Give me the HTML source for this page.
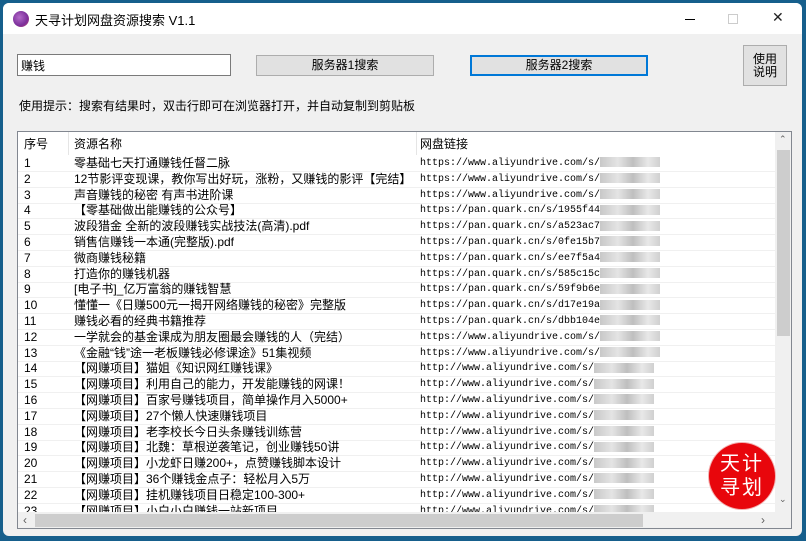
<!DOCTYPE html><html><head><meta charset="utf-8"><style>
*{margin:0;padding:0;box-sizing:border-box}
body{width:806px;height:541px;background:#165f8c;position:relative;overflow:hidden;font-family:"Liberation Sans","Noto Sans CJK SC",sans-serif;font-size:12px;color:#000}
.win{position:absolute;left:3px;top:3px;width:799px;height:533px;background:#f0f0f0;border-radius:6px;overflow:hidden}
.title{position:absolute;left:0;top:0;width:100%;height:31px;background:#fff}
.abs{position:absolute}
.btn{position:absolute;background:#e1e1e1;border:1px solid #adadad;text-align:center;font-size:12px}
.tbl{position:absolute;left:14px;top:128px;width:775px;height:398px;background:#fff;border:1px solid #828790;overflow:hidden}
.row{position:absolute;left:0;width:757px;height:16px;border-bottom:1px solid #f0f0f0;font-size:12px;line-height:15px;white-space:nowrap}
.row span{position:absolute}
.u{font-family:"Liberation Mono",monospace;font-size:10px;letter-spacing:0}
.blur{display:inline-block;width:60px;height:10px;vertical-align:middle;background:linear-gradient(90deg,#c8c8c8,#e4e4e4 30%,#bfbfbf 55%,#e8e8e8 80%,#d0d0d0)}
</style></head><body>
<div class="win">
<div class="title">
<div class="abs" style="left:10px;top:8px;width:16px;height:16px;border-radius:50%;background:radial-gradient(circle at 40% 40%,#b36ac9,#7b2f9a 60%,#d0486a)"></div>
<div class="abs" style="left:32px;top:7px;font-size:13px">天寻计划网盘资源搜索 V1.1</div>
<div class="abs" style="left:682px;top:16px;width:10px;height:1px;background:#000"></div>
<div class="abs" style="left:725px;top:11px;width:10px;height:10px;border:1px solid #ccc"></div>
<div class="abs" style="left:769px;top:6px;font-size:14px;color:#222">✕</div>
</div>
<div class="abs" style="left:14px;top:51px;width:214px;height:22px;background:#fff;border:1px solid #7a7a7a;padding:2px 3px;font-size:12px">赚钱</div>
<div class="btn" style="left:253px;top:52px;width:178px;height:21px;line-height:19px">服务器1搜索</div>
<div class="btn" style="left:467px;top:52px;width:178px;height:21px;line-height:17px;border:2px solid #0078d7">服务器2搜索</div>
<div class="btn" style="left:740px;top:42px;width:44px;height:41px;font-size:12px;line-height:13px;padding-top:7px">使用<br>说明</div>
<div class="abs" style="left:16px;top:94px;font-size:12px">使用提示：搜索有结果时，双击行即可在浏览器打开，并自动复制到剪贴板</div>
<div class="tbl">
<div class="abs" style="left:0;top:0;width:757px;height:23px;background:#fff;font-size:12px;line-height:25px">
<span class="abs" style="left:6px">序号</span><span class="abs" style="left:50px;top:0;width:1px;height:23px;background:#e5e5e5"></span>
<span class="abs" style="left:56px">资源名称</span><span class="abs" style="left:398px;top:0;width:1px;height:23px;background:#e5e5e5"></span>
<span class="abs" style="left:402px">网盘链接</span></div>
<div id="rows"></div>
<div class="abs" style="left:757px;top:0;width:17px;height:380px;background:#f0f0f0"><div class="abs" style="left:2px;top:18px;width:13px;height:186px;background:#cdcdcd"></div><div class="abs" style="left:4px;top:2px;font-size:9px;color:#606060">⌃</div><div class="abs" style="left:4px;top:362px;font-size:9px;color:#606060">⌄</div></div>
<div class="abs" style="left:0;top:380px;width:774px;height:17px;background:#f0f0f0"><div class="abs" style="left:17px;top:2px;width:608px;height:13px;background:#cdcdcd"></div><div class="abs" style="left:5px;top:1px;color:#606060">‹</div><div class="abs" style="left:743px;top:1px;color:#606060">›</div></div>
</div>
<div class="abs" style="left:706px;top:440px;width:66px;height:66px;border-radius:50%;background:#e8060c;color:#fff;font-size:20px;line-height:24px;text-align:center;padding-top:9px;letter-spacing:2px;box-shadow:0 0 0 1px #f3b0b0">天计<br>寻划</div>
</div>
<script>
var n=["零基础七天打通赚钱任督二脉","12节影评变现课，教你写出好玩，涨粉，又赚钱的影评【完结】","声音赚钱的秘密 有声书进阶课","【零基础做出能赚钱的公众号】","波段猎金 全新的波段赚钱实战技法(高清).pdf","销售信赚钱一本通(完整版).pdf","微商赚钱秘籍","打造你的赚钱机器","[电子书]_亿万富翁的赚钱智慧","懂懂一《日赚500元一揭开网络赚钱的秘密》完整版","赚钱必看的经典书籍推荐","一学就会的基金课成为朋友圈最会赚钱的人（完结）","《金融“钱”途一老板赚钱必修课途》51集视频","【网赚项目】猫姐《知识网红赚钱课》","【网赚项目】利用自己的能力，开发能赚钱的网课！","【网赚项目】百家号赚钱项目，简单操作月入5000+","【网赚项目】27个懒人快速赚钱项目","【网赚项目】老李校长今日头条赚钱训练营","【网赚项目】北魏：草根逆袭笔记，创业赚钱50讲","【网赚项目】小龙虾日赚200+，点赞赚钱脚本设计","【网赚项目】36个赚钱金点子：轻松月入5万","【网赚项目】挂机赚钱项目日稳定100-300+","【网赚项目】小白小白赚钱一站新项目"];
var u=["https://www.aliyundrive.com/s/","https://www.aliyundrive.com/s/","https://www.aliyundrive.com/s/","https://pan.quark.cn/s/1955f44","https://pan.quark.cn/s/a523ac7","https://pan.quark.cn/s/0fe15b7","https://pan.quark.cn/s/ee7f5a4","https://pan.quark.cn/s/585c15c","https://pan.quark.cn/s/59f9b6e","https://pan.quark.cn/s/d17e19a","https://pan.quark.cn/s/dbb104e","https://www.aliyundrive.com/s/","https://www.aliyundrive.com/s/"];
var h="";for(var i=0;i<23;i++){var url=i<13?u[i]:"http://www.aliyundrive.com/s/";var t=24+i*15.8;
h+='<div class="row" style="top:'+t+'px"><span style="left:6px">'+(i+1)+'</span><span style="left:56px">'+n[i]+'</span><span class="u" style="left:402px">'+url+'<i class="blur"></i></span></div>';}
document.getElementById("rows").innerHTML=h;
</script>
</body></html>
